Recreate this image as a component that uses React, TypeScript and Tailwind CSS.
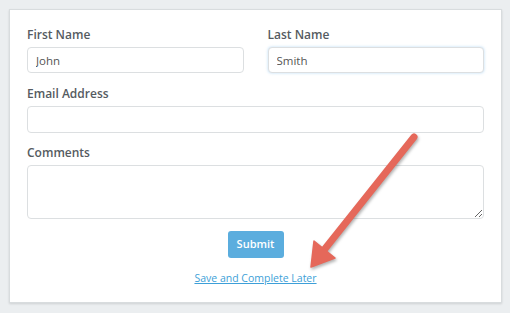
import React from "react";

const font = { fontFamily: '"Open Sans", "Noto Sans", sans-serif' };

const Label = ({ children }: { children: React.ReactNode }) => (
  <label className="block text-[12px] font-semibold leading-[18px] text-[#555b61]">{children}</label>
);

const inputBase =
  "block w-full h-[26px] rounded-[4px] border border-[#dcdfe1] bg-white px-2 text-[11.5px] text-[#555] outline-none";

export default function App() {
  return (
    <div className="relative h-[313px] w-[510px] bg-[#ebeef0] pl-[9px] pr-[8px] pt-[9px]" style={font}>
      <div className="border border-[#d8dcde] bg-white px-[17px] pb-[16px] pt-[16px] shadow-[0_1px_2px_rgba(0,0,0,0.12)]">
        <div className="grid grid-cols-2 gap-x-6">
          <div>
            <Label>First Name</Label>
            <input className={`${inputBase} mt-[3px]`} defaultValue="John" />
          </div>
          <div>
            <Label>Last Name</Label>
            <input
              className={`${inputBase} mt-[3px] border-[#8cc6e6] shadow-[0_0_3px_rgba(102,175,233,0.45)]`}
              defaultValue="Smith"
            />
          </div>
        </div>
        <div className="mt-[12px]">
          <Label>Email Address</Label>
          <input className={`${inputBase} mt-[3px] h-[27px]`} />
        </div>
        <div className="mt-[11px]">
          <Label>Comments</Label>
          <textarea className="mt-[3px] block h-[54px] w-full resize-y rounded-[4px] border border-[#dcdfe1] bg-white px-2 py-1 text-[11.5px] outline-none" />
        </div>
        <div className="mt-[12px] flex flex-col items-center">
          <button className="h-[27px] w-[56px] rounded-[3px] bg-[#5badde] text-[11px] font-semibold text-white">
            Submit
          </button>
          <a href="#" className="mt-[12px] text-[10.5px] leading-[16px] text-[#3d9fd8] underline">
            Save and Complete Later
          </a>
        </div>
      </div>
      <svg
        className="pointer-events-none absolute left-0 top-0"
        width="510"
        height="313"
        viewBox="0 0 510 313"
        style={{ filter: "drop-shadow(1px 2px 1.5px rgba(0,0,0,0.3))" }}
      >
        <line x1="414" y1="137" x2="324" y2="250" stroke="#e5685a" strokeWidth="7" strokeLinecap="round" />
        <polygon points="311,267 314,241 335,258" fill="#e5685a" stroke="#e5685a" strokeWidth="1.5" strokeLinejoin="round" />
      </svg>
    </div>
  );
}
